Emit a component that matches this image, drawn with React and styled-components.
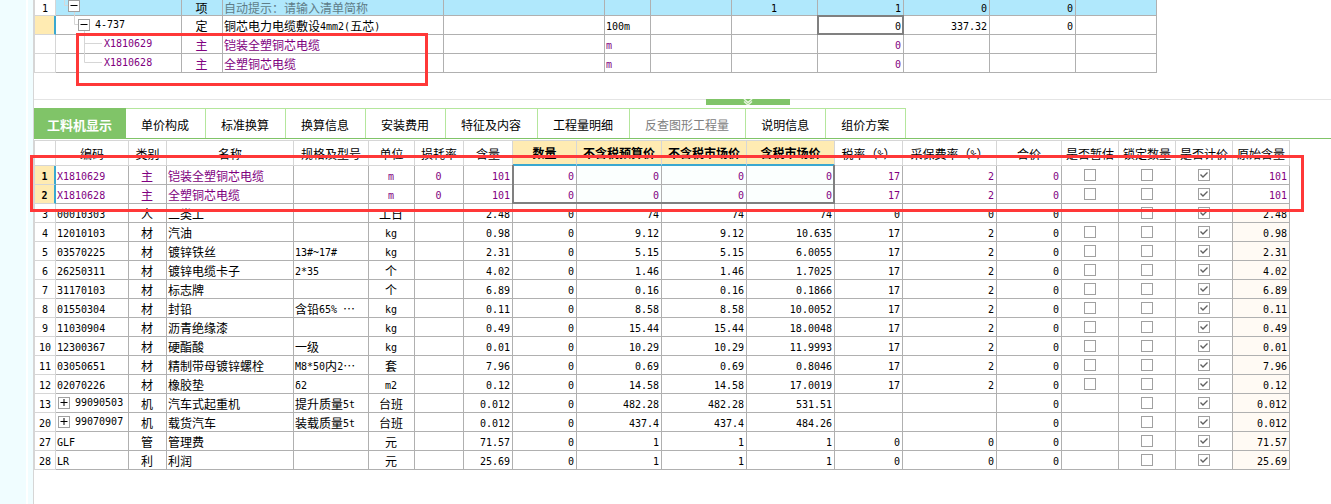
import React from 'react';
import styled, { createGlobalStyle, ThemeProvider } from 'styled-components';

const theme = {
  line: '#b0b0b0',
  lightLine: '#d6d6d6',
  green: '#80c468',
  lightGreen: '#b4e69c',
  yellow: '#ffebb2',
  blue: '#3aa8d0',
  sky: '#b0e8fc',
  purple: '#800080',
  red: '#ff3838',
};

const GlobalStyle = createGlobalStyle`
  * {
    box-sizing: border-box;
  }

  body {
    margin: 0;
    background: #fff;
    color: #000;
    font-family: 'Noto Sans CJK SC', 'Liberation Sans', sans-serif;
    font-size: 12px;
    line-height: 15px;
    overflow: hidden;
  }
`;

const Page = styled.div`
  display: flex;
  min-height: 100vh;
`;

const Rail = styled.aside`
  flex: none;
  display: flex;
  gap: 2px;
`;

const RailStrip = styled.div`
  width: ${props => (props.$thin ? '5px' : '26px')};
  background: #f0fdff;
`;

const Workspace = styled.main`
  flex: 1;
  min-width: 0;
  border-left: 1px solid ${props => props.theme.lightLine};
`;

const ListPanel = styled.section`
  position: relative;
  padding-bottom: 26px;
  border-bottom: 1px solid #e4e4e4;
`;

const Splitter = styled.div`
  height: 9px;
  margin-top: -1px;
  padding-left: 51.8%;
`;

const SplitterHandle = styled.button`
  position: relative;
  display: flex;
  justify-content: center;
  width: 84px;
  height: 6px;
  padding: 0;
  border: 0;
  background: ${props => props.theme.green};
`;

const Tabs = styled.div`
  display: flex;
  height: 31px;
  border-bottom: 1px solid ${props => props.theme.green};
`;

const Tab = styled.button`
  padding: 2px 16px 0 15px;
  border: 0;
  border-top: 1px solid ${props => props.theme.lightGreen};
  border-right: 1px solid ${props => props.theme.lightGreen};
  background: #fff;
  color: ${props => (props.disabled ? '#808080' : '#000')};
  font: inherit;

  &[aria-selected='true'] {
    padding: 2px 13px 0;
    border-color: ${props => props.theme.green};
    background: ${props => props.theme.green};
    color: #fff;
    font-size: 13px;
    font-weight: bold;
  }
`;

const DetailPanel = styled.section`
  position: relative;
  width: max-content;
  margin-top: 1px;
`;

const Table = styled.table`
  table-layout: fixed;
  width: 1px;
  border-spacing: 0;
`;

const HeadCell = styled.th`
  height: 26px;
  padding: 0;
  overflow: hidden;
  border: 1px solid ${props => props.theme.lightLine};
  border-left-width: ${props => (props.$first ? '1px' : 0)};
  border-bottom: ${props => (props.$selected ? `2px solid ${props.theme.blue}` : `1px solid ${props.theme.lightLine}`)};
  background: ${props => (props.$selected ? props.theme.yellow : '#fff')};
  font-weight: ${props => (props.$selected ? 'bold' : 'normal')};
  white-space: nowrap;
`;

const RowHead = styled.th`
  padding: 0;
  border: 1px solid ${props => props.theme.lightLine};
  border-top: 0;
  border-right: ${props => (props.$selected ? `2px solid ${props.theme.blue}` : `1px solid ${props.theme.lightLine}`)};
  background: ${props => (props.$selected ? props.theme.yellow : '#fff')};
  color: #000;
  font-weight: ${props => (props.$selected ? 'bold' : 'normal')};
`;

const Cell = styled.td`
  position: relative;
  padding: 0 2px 0 1px;
  border-right: 1px solid ${props => props.theme.line};
  border-bottom: 1px solid ${props => props.theme.line};
  background: ${props => props.$fill || 'transparent'};
  text-align: ${props => props.$align || 'left'};
  white-space: nowrap;

  &::after {
    content: '';
    display: ${props => (props.$edges ? 'block' : 'none')};
    position: absolute;
    inset: -1px;
    border: 0 solid #808080;
    border-width: ${props => props.$edges};
    pointer-events: none;
  }
`;

const Row = styled.tr`
  height: ${props => (props.$cut ? '16px' : '19px')};
  color: ${props => (props.$main ? props.theme.purple : '#000')};

  td {
    background-color: ${props => (props.$cut ? props.theme.sky : '')};
  }
`;

const Latin = styled.span`
  font-family: 'DejaVu Sans Mono', monospace;
  font-size: 10px;
  line-height: 1;
  vertical-align: 1px;
`;

const Hint = styled.span`
  color: #5f7d88;
`;

const TreeNode = styled.div`
  display: flex;
  align-items: ${props => (props.$cut ? 'flex-start' : 'center')};
  height: ${props => (props.$cut ? '15px' : '18px')};
  margin-left: -1px;
`;

const Guide = styled.svg`
  flex: none;
  height: 18px;
  overflow: visible;
  fill: none;
  stroke: ${props => props.theme.lightLine};
`;

const Toggle = styled.button`
  flex: none;
  display: flex;
  width: 12px;
  height: 12px;
  margin: 0 5px 0 0;
  padding: 0;
  border: 1px solid #a0a0a0;
  background: #fff;
`;

const InlineNode = styled.div`
  display: flex;
  align-items: center;
  padding-left: 1px;
`;

const CheckBox = styled.div`
  display: grid;
  width: 12px;
  height: 12px;
  margin: 0 auto;

  & > * {
    grid-area: 1 / 1;
  }
`;

const CheckInput = styled.input`
  appearance: none;
  width: 12px;
  height: 12px;
  margin: 0;
  border: 1px solid #a0a0a0;
  background: #fff;
`;

const CheckMark = styled.svg`
  position: relative;
  width: 12px;
  height: 12px;
  fill: none;
  stroke: #606060;
  stroke-width: 1.4;
  pointer-events: none;
`;

const Frame = styled.div`
  position: absolute;
  border: 3px solid ${props => props.theme.red};
  pointer-events: none;
`;

const ListFrame = styled(Frame)`
  top: 33px;
  left: 42px;
  width: 352px;
  height: 53px;
`;

const DetailFrame = styled(Frame)`
  top: 15px;
  left: -4px;
  right: -14px;
  height: 57px;
`;

const listWidths = [22, 126, 41, 221, 161, 46, 81, 86, 86, 86, 86, 81];

const tabs = ['工料机显示', '单价构成', '标准换算', '换算信息', '安装费用', '特征及内容', '工程量明细', '反查图形工程量', '说明信息', '组价方案'];

const columns = [
  { title: '编码', width: 73 },
  { title: '类别', width: 38, align: 'center' },
  { title: '名称', width: 127 },
  { title: '规格及型号', width: 75 },
  { title: '单位', width: 46, align: 'center' },
  { title: '损耗率', width: 49, align: 'center' },
  { title: '含量', width: 49, align: 'right' },
  { title: '数量', width: 64, align: 'right', selected: true },
  { title: '不含税预算价', width: 85, align: 'right', selected: true },
  { title: '不含税市场价', width: 85, align: 'right', selected: true },
  { title: '含税市场价', width: 88, align: 'right', selected: true },
  { title: '税率（%）', width: 68, align: 'right' },
  { title: '采保费率（%）', width: 94, align: 'right' },
  { title: '合价', width: 65, align: 'right' },
  { title: '是否暂估', width: 57, align: 'center' },
  { title: '锁定数量', width: 57, align: 'center' },
  { title: '是否计价', width: 57, align: 'center' },
  { title: '原始含量', width: 57, align: 'right' },
];

// no, code, kind, name, spec, unit, loss, content, budget price, market price, taxed price, tax, fee rate
const materials = [
  ['1', 'X1810629', '主', '铠装全塑铜芯电缆', '', 'm', '0', '101', '0', '0', '0', '17', '2'],
  ['2', 'X1810628', '主', '全塑铜芯电缆', '', 'm', '0', '101', '0', '0', '0', '17', '2'],
  ['3', '00010303', '人', '二类工', '', '工日', '', '2.48', '74', '74', '74', '0', '0'],
  ['4', '12010103', '材', '汽油', '', 'kg', '', '0.98', '9.12', '9.12', '10.635', '17', '2'],
  ['5', '03570225', '材', '镀锌铁丝', '13#~17#', 'kg', '', '2.31', '5.15', '5.15', '6.0055', '17', '2'],
  ['6', '26250311', '材', '镀锌电缆卡子', '2*35', '个', '', '4.02', '1.46', '1.46', '1.7025', '17', '2'],
  ['7', '31170103', '材', '标志牌', '', '个', '', '6.89', '0.16', '0.16', '0.1866', '17', '2'],
  ['8', '01550304', '材', '封铅', '含铅65% …', 'kg', '', '0.11', '8.58', '8.58', '10.0052', '17', '2'],
  ['9', '11030904', '材', '沥青绝缘漆', '', 'kg', '', '0.49', '15.44', '15.44', '18.0048', '17', '2'],
  ['10', '12300367', '材', '硬酯酸', '一级', 'kg', '', '0.01', '10.29', '10.29', '11.9993', '17', '2'],
  ['11', '03050651', '材', '精制带母镀锌螺栓', 'M8*50内2…', '套', '', '7.96', '0.69', '0.69', '0.8046', '17', '2'],
  ['12', '02070226', '材', '橡胶垫', 'δ2', 'm2', '', '0.12', '14.58', '14.58', '17.0019', '17', '2'],
  ['13', '99090503', '机', '汽车式起重机', '提升质量5t', '台班', '', '0.012', '482.28', '482.28', '531.51', '', ''],
  ['20', '99070907', '机', '载货汽车', '装载质量5t', '台班', '', '0.012', '437.4', '437.4', '484.26', '', ''],
  ['27', 'GLF', '管', '管理费', '', '元', '', '71.57', '1', '1', '1', '0', '0'],
  ['28', 'LR', '利', '利润', '', '元', '', '25.69', '1', '1', '1', '0', '0'],
];

// Latin runs are set in the narrow monospace face, the rest in the CJK face
const Text = ({ children }) =>
  String(children)
    .split(/([\x20-\x7eδ]+)/)
    .map((part, i) => (i % 2 ? <Latin key={i}>{part}</Latin> : part));

const ToggleButton = ({ open }) => (
  <Toggle aria-label={open ? '折叠' : '展开'}>
    <svg width="10" height="10" fill="none" stroke="#000">
      <path d={open ? 'M1.5 4.5h7' : 'M1.5 4.5h7M5 1v7'} />
    </svg>
  </Toggle>
);

const Check = ({ label, checked }) => (
  <CheckBox>
    <CheckInput type="checkbox" aria-label={label} defaultChecked={checked} />
    {checked && (
      <CheckMark viewBox="0 0 12 12">
        <path d="M2.5 5.5L5 8L9.5 3.5" />
      </CheckMark>
    )}
  </CheckBox>
);

const ListTable = () => (
  <Table>
    <colgroup>
      {listWidths.map((width, i) => (
        <col key={i} width={width} />
      ))}
    </colgroup>
    <tbody>
      <Row $cut>
        <RowHead><Text>1</Text></RowHead>
        <Cell>
          <TreeNode $cut>
            <Guide width="12"><path d="M8.500 0V5.500H12" /></Guide>
            <ToggleButton open />
          </TreeNode>
        </Cell>
        <Cell $align="center">项</Cell>
        <Cell><Hint>自动提示：请输入清单简称</Hint></Cell>
        <Cell />
        <Cell />
        <Cell />
        <Cell $align="center"><Text>1</Text></Cell>
        <Cell $align="right"><Text>1</Text></Cell>
        <Cell $align="right"><Text>0</Text></Cell>
        <Cell $align="right"><Text>0</Text></Cell>
        <Cell />
      </Row>
      <Row>
        <RowHead $selected />
        <Cell>
          <TreeNode>
            <Guide width="22"><path d="M18.500 -4V8.500H22M28.500 15V18" /></Guide>
            <ToggleButton open />
            <Text>4-737</Text>
          </TreeNode>
        </Cell>
        <Cell $align="center">定</Cell>
        <Cell><Text>铜芯电力电缆敷设4mm2(五芯)</Text></Cell>
        <Cell />
        <Cell><Text>100m</Text></Cell>
        <Cell />
        <Cell />
        <Cell $align="right" $edges="2px"><Text>0</Text></Cell>
        <Cell $align="right"><Text>337.32</Text></Cell>
        <Cell $align="right"><Text>0</Text></Cell>
        <Cell />
      </Row>
      {materials.slice(0, 2).map((item, i) => (
        <Row key={item[1]} $main>
          <RowHead />
          <Cell>
            <TreeNode>
              <Guide width="48">
                <path d={i ? 'M28.500 -1V8.500H46' : 'M28.500 0V18M28 8.500H46'} />
              </Guide>
              <Text>{item[1]}</Text>
            </TreeNode>
          </Cell>
          <Cell $align="center">{item[2]}</Cell>
          <Cell>{item[3]}</Cell>
          <Cell />
          <Cell><Text>m</Text></Cell>
          <Cell />
          <Cell />
          <Cell $align="right"><Text>0</Text></Cell>
          <Cell />
          <Cell />
          <Cell />
        </Row>
      ))}
    </tbody>
  </Table>
);

const selectionEdges = (row, col) => {
  if (row > 1 || col < 7 || col > 10) return undefined;
  return `0 ${col === 10 ? '2px' : 0} ${row === 1 ? '2px' : 0} ${col === 7 ? '2px' : 0}`;
};

const MaterialRow = ({ item, index }) => {
  const [no, code, kind, name, spec, unit, loss, content, budget, market, taxed, tax, fee] = item;
  const selected = index < 2;
  const hasEstimate = kind === '主' || kind === '材';
  const values = [
    kind === '机' ? (
      <InlineNode>
        <ToggleButton />
        <Text>{code}</Text>
      </InlineNode>
    ) : code,
    kind, name, spec, unit, loss, content, '0', budget, market, taxed, tax, fee, '0',
    hasEstimate ? <Check label={`${name} 是否暂估`} /> : '',
    <Check label={`${name} 锁定数量`} />,
    <Check label={`${name} 是否计价`} checked />,
    content,
  ];
  const fill = col => {
    if (col === 17 && !selected) return '#fffaf4';
    if (selected && col > 7 && col < 11) return '#fbfffe';
    return undefined;
  };

  return (
    <Row $main={selected}>
      <RowHead $selected={selected}><Text>{no}</Text></RowHead>
      {values.map((value, col) => (
        <Cell key={col} $align={columns[col].align} $fill={fill(col)} $edges={selectionEdges(index, col)}>
          {typeof value === 'string' ? <Text>{value}</Text> : value}
        </Cell>
      ))}
    </Row>
  );
};

const DetailTable = () => (
  <Table>
    <colgroup>
      <col width={22} />
      {columns.map(column => (
        <col key={column.title} width={column.width} />
      ))}
    </colgroup>
    <thead>
      <tr>
        <HeadCell $first />
        {columns.map(column => (
          <HeadCell key={column.title} $selected={column.selected}>
            <Text>{column.title}</Text>
          </HeadCell>
        ))}
      </tr>
    </thead>
    <tbody>
      {materials.map((item, index) => (
        <MaterialRow key={item[0]} item={item} index={index} />
      ))}
    </tbody>
  </Table>
);

const App = () => {
  return (
    <ThemeProvider theme={theme}>
      <GlobalStyle />
      <Page lang="zh-CN">
        <Rail>
          <RailStrip />
          <RailStrip $thin />
        </Rail>
        <Workspace>
          <ListPanel>
            <ListTable />
            <ListFrame />
          </ListPanel>
          <Splitter>
            <SplitterHandle aria-label="收起">
              <svg width="10" height="6" fill="none" stroke="#e4f5dc" strokeWidth="1.5">
                <path d="M1 0L5 3.500L9 0M1 2.500L5 6L9 2.500" />
              </svg>
            </SplitterHandle>
          </Splitter>
          <Tabs role="tablist">
            {tabs.map((tab, i) => (
              <Tab key={tab} role="tab" aria-selected={i === 0} disabled={tab === '反查图形工程量'}>
                {tab}
              </Tab>
            ))}
          </Tabs>
          <DetailPanel>
            <DetailTable />
            <DetailFrame />
          </DetailPanel>
        </Workspace>
      </Page>
    </ThemeProvider>
  );
};

export default App;
